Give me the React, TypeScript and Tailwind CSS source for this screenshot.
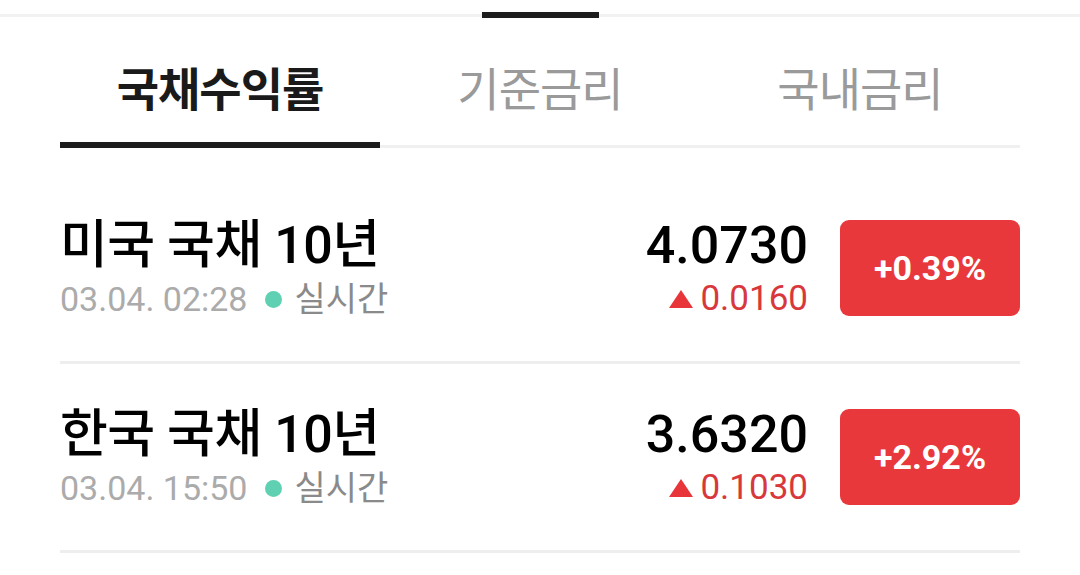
const rows = [
  { name: "미국 국채 10년", time: "03.04. 02:28", value: "4.0730", change: "0.0160", rate: "+0.39%" },
  { name: "한국 국채 10년", time: "03.04. 15:50", value: "3.6320", change: "0.1030", rate: "+2.92%" },
];

const tabs = ["국채수익률", "기준금리", "국내금리"];

function Row({ item, first }: { item: (typeof rows)[number]; first?: boolean }) {
  return (
    <div className={first ? "mt-[27px]" : ""}>
      <div className="flex items-center py-[45px]">
        <div className="flex flex-col flex-1">
          <div className="text-[52px] leading-[52px] font-medium text-black tracking-[-0.5px]">{item.name}</div>
          <div className="flex items-center mt-[10px] text-[34px] leading-[34px]">
            <span className="text-[#ababab]">{item.time}</span>
            <span className="ml-[18px] w-[17px] h-[17px] rounded-full bg-[#5fd1b2]" />
            <span className="ml-[12px] text-[#8a8a8a]">실시간</span>
          </div>
        </div>
        <div className="flex flex-col items-end">
          <div className="text-[52px] leading-[52px] font-medium text-black">{item.value}</div>
          <div className="flex items-center mt-[10px] text-[35px] leading-[34px] text-[#d8383c]">
            <svg width="24" height="18" viewBox="0 0 24 18" className="mr-[7px]">
              <path d="M12 0 L24 18 L0 18 Z" fill="#e8353a" />
            </svg>
            {item.change}
          </div>
        </div>
        <div className="ml-[32px] w-[180px] h-[96px] rounded-[9px] bg-[#e8383c] flex items-center justify-center text-white text-[34px] font-bold">
          {item.rate}
        </div>
      </div>
      <div className="h-[3px] bg-[#eeeeee]" />
    </div>
  );
}

export default function App() {
  return (
    <div className="w-[1080px] h-[575px] bg-white overflow-hidden font-['Roboto','Noto_Sans_CJK_KR',sans-serif]">
      <div className="pt-[12px] flex items-center">
        <div className="flex-1 h-[3px] bg-[#f2f2f2]" />
        <div className="w-[117px] h-[6px] bg-[#1c1c1c]" />
        <div className="flex-1 h-[3px] bg-[#f2f2f2]" />
      </div>

      <div className="px-[60px]">
        <div className="grid grid-cols-3 h-[124px] pt-[20px]">
          {tabs.map((t, i) => (
            <div
              key={t}
              className={
                i === 0
                  ? "flex items-center justify-center text-[46px] font-bold text-[#1a1a1a] tracking-[-1px]"
                  : "flex items-center justify-center text-[46px] text-[#9a9a9a] tracking-[-1px]"
              }
            >
              {t}
            </div>
          ))}
        </div>
        <div className="flex items-end h-[6px]">
          <div className="w-[320px] h-[6px] bg-[#1c1c1c]" />
          <div className="flex-1 h-[3px] bg-[#f0f0f0]" />
        </div>

        {rows.map((r, i) => (
          <Row key={r.name} item={r} first={i === 0} />
        ))}
      </div>
    </div>
  );
}
